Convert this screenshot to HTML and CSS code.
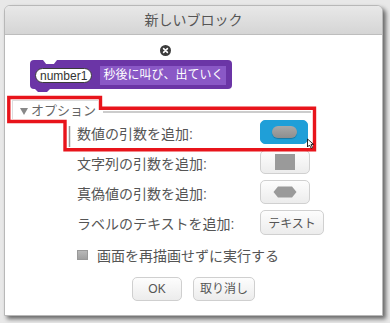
FILE: index.html
```html
<!DOCTYPE html>
<html lang="ja">
<head>
    <meta charset="UTF-8">
    <title>新しいブロック</title>
    <link rel="stylesheet" href="styles.css">
</head>
<body>
    <section class="dialog">
        <div class="title">新しいブロック</div>
        <div class="content">
            <div class="close-row">
                <svg class="close" width="11" height="11" viewBox="0 0 11 11">
                    <circle cx="5.5" cy="5.5" r="5.5" fill="#3c3c3c"/>
                    <path d="M3.6 3.6 L7.4 7.4 M7.4 3.6 L3.6 7.4" stroke="#fff" stroke-width="1.6" stroke-linecap="round"/>
                </svg>
            </div>
            <div class="block">
                <span class="arg">number1</span>
                <span class="label">秒後に叫び、出ていく</span>
            </div>
            <div class="options"><span class="tri"></span>オプション</div>
            <div class="args">
                <span class="arg-label">数値の引数を追加:</span>
                <a href="javascript:;" class="type-btn active"><span class="oval"></span></a>
                <span class="arg-label">文字列の引数を追加:</span>
                <a href="javascript:;" class="type-btn"><span class="square"></span></a>
                <span class="arg-label">真偽値の引数を追加:</span>
                <a href="javascript:;" class="type-btn">
                    <svg width="24" height="12" viewBox="0 0 24 12"><polygon points="5,0.5 19,0.5 23.5,6 19,11.5 5,11.5 0.5,6" fill="#9a9a9a"/></svg>
                </a>
                <span class="arg-label">ラベルのテキストを追加:</span>
                <a href="javascript:;" class="type-btn text-btn">テキスト</a>
            </div>
            <div class="check"><span class="box"></span>画面を再描画せずに実行する</div>
            <div class="actions">
                <a href="javascript:;" class="btn ok">OK</a>
                <a href="javascript:;" class="btn cancel">取り消し</a>
            </div>
        </div>
    </section>
    <!-- 注釈の赤枠 -->
    <svg class="callout" width="390" height="323" viewBox="0 0 390 323">
        <defs>
            <filter id="soft" x="-10%" y="-50%" width="120%" height="200%"><feGaussianBlur stdDeviation="0.8"/></filter>
        </defs>
        <path d="M11 125 H63" stroke="#777" stroke-width="2.5" filter="url(#soft)"/>
        <path d="M103.5 99 V106" stroke="#777" stroke-width="2.5" filter="url(#soft)"/>
        <path d="M12 100.5 H98 M12.5 100 V119" stroke="#ddd" stroke-width="1" fill="none"/>
        <path d="M103 112 H311" stroke="#bbb" stroke-width="1.5"/>
        <path d="M69.5 126 V147" stroke="#999" stroke-width="1.5"/>
        <path d="M8.8 97.5 H100.5 V108.3 H314.5 V149.7 H65 V121.5 H8.8 Z" fill="none" stroke="#e8141b" stroke-width="3.4"/>
        <path d="M307.5 139 V147 L309.5 145 L311.2 148.3 L312.6 147.6 L311 144.4 L313.6 144.4 Z" fill="#fff" stroke="#111" stroke-width="0.9" stroke-linejoin="round"/>
    </svg>
</body>
</html>
```

FILE: styles.css
```css
html,body{ height:100%; }
body{
    margin:0;
    padding:5px 0 0 4px;
    background:#e8e8e8;
    font-family:"Liberation Sans","Noto Sans CJK JP",sans-serif;
    color:#555;
    position:relative;
    box-sizing:border-box;
}
a{ text-decoration:none; color:inherit; }

.dialog{
    width:377px;
    background:#fff;
    border:1px solid #b8b8b8;
    border-radius:6px 6px 0 0;
    box-shadow:3px 3px 4px rgba(0,0,0,.55);
}
.dialog .title{
    height:28px;
    line-height:28px;
    text-align:center;
    font-size:14px;
    color:#555;
    background:linear-gradient(#e8e8e8,#d5d5d5);
    border-bottom:1px solid #bdbdbd;
    border-radius:5px 5px 0 0;
}
.dialog .content{
    padding:10px 0 14px 0;
}

.close-row{ height:11px; padding-left:155px; }
.close-row .close{ display:block; }

.block{
    position:relative;
    display:inline-flex;
    align-items:center;
    gap:8px;
    height:29px;
    margin:4px 0 0 25px;
    padding:2px 6px 0 5px;
    box-sizing:border-box;
    background:#6b35a6;
    border-radius:4px;
}
.block::before{
    content:"";
    position:absolute;
    left:13px;
    top:0;
    width:14px;
    height:4px;
    background:#fff;
    clip-path:polygon(0 0,100% 0,78% 100%,22% 100%);
}
.block::after{
    content:"";
    position:absolute;
    left:5px;
    top:29px;
    width:15px;
    height:3px;
    background:#6b35a6;
    clip-path:polygon(0 0,100% 0,80% 100%,20% 100%);
}
.block .arg{
    height:15px;
    line-height:14px;
    padding:0 4px;
    border:1px solid #3a3a3a;
    border-radius:8px;
    background:#fff;
    color:#333;
    font-size:12px;
    box-sizing:border-box;
}
.block .label{
    height:19px;
    line-height:19px;
    padding:0 3px;
    background:#8a58c6;
    color:#fff;
    font-size:12px;
}

.options{
    margin:16px 0 0 15px;
    height:12px;
    line-height:12px;
    font-size:13px;
    color:#666;
    display:flex;
    align-items:center;
}
.options .tri{
    width:0;
    height:0;
    border-left:4.5px solid transparent;
    border-right:4.5px solid transparent;
    border-top:7px solid #888;
    margin-right:3px;
}

.args{
    display:grid;
    grid-template-columns:183px auto;
    grid-auto-rows:30px;
    align-items:center;
    justify-items:start;
    margin-left:72px;
}
.args .arg-label{ font-size:14px; color:#555; padding-top:2px; }
.type-btn{
    width:50px;
    height:24px;
    box-sizing:border-box;
    border:1px solid #d0d0d0;
    border-radius:5px;
    background:linear-gradient(#fdfdfd,#ececec);
    display:flex;
    align-items:center;
    justify-content:center;
}
.type-btn.active{
    width:48px;
    border-color:#1f9fd8;
    background:#1f9fd8;
}
.type-btn .oval{
    width:25px;
    height:12px;
    border-radius:6px;
    background:linear-gradient(#a8a8a8,#8e8e8e);
    box-shadow:0 1px 1px rgba(0,0,0,.25);
}
.type-btn .square{
    width:20px;
    height:16px;
    background:#9a9a9a;
}
.type-btn.text-btn{
    width:64px;
    height:25px;
    font-size:12px;
    color:#555;
}

.check{
    margin:9px 0 0 72px;
    height:18px;
    display:flex;
    align-items:center;
    font-size:14px;
    color:#555;
}
.check .box{
    width:11px;
    height:10px;
    box-sizing:border-box;
    border:1px solid #999;
    background:linear-gradient(#b8b8b8,#a0a0a0);
    margin-right:9px;
}

.actions{
    margin-top:13px;
    display:flex;
    justify-content:center;
    gap:11px;
}
.actions .btn{
    height:24px;
    line-height:22px;
    box-sizing:border-box;
    border:1px solid #cfcfcf;
    border-radius:5px;
    background:linear-gradient(#fdfdfd,#ececec);
    font-size:12px;
    color:#555;
    text-align:center;
}
.actions .ok{ width:50px; }
.actions .cancel{ width:62px; }

.callout{
    position:absolute;
    left:0;
    top:0;
    pointer-events:none;
}
```
